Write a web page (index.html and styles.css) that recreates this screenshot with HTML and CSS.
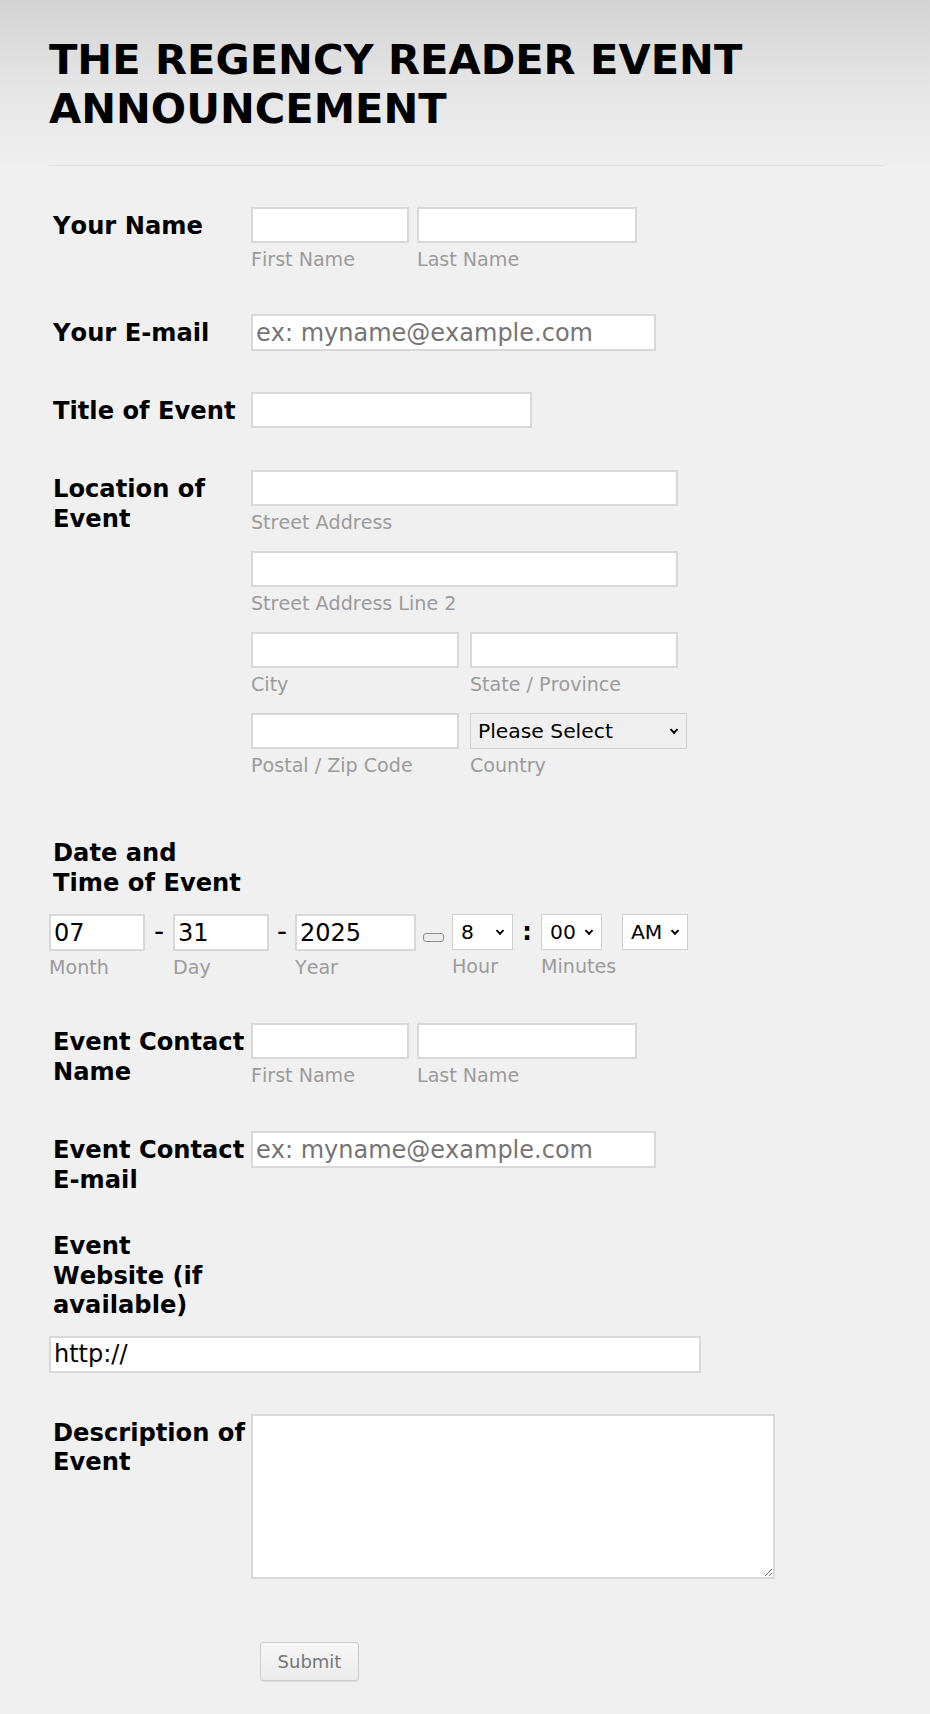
FILE: index.html
```html
<!DOCTYPE html>
<html lang="en">
<head>
<meta charset="utf-8">
<title>The Regency Reader Event Announcement</title>
<link rel="stylesheet" href="styles.css">
</head>
<body>
<header class="header">
  <h1 class="title">THE REGENCY READER EVENT ANNOUNCEMENT</h1>
  <div class="divider"></div>
</header>

<form class="form">
  <div class="row r-name">
    <label class="label">Your Name</label>
    <div class="pair">
      <div class="cell"><input class="in in-first" type="text"><span class="sub">First Name</span></div>
      <div class="cell"><input class="in in-last" type="text"><span class="sub">Last Name</span></div>
    </div>
  </div>

  <div class="row r-email">
    <label class="label">Your E-mail</label>
    <input class="in in-email tall" type="email" placeholder="ex: myname@example.com">
  </div>

  <div class="row r-title">
    <label class="label">Title of Event</label>
    <input class="in in-title" type="text">
  </div>

  <div class="row r-loc">
    <label class="label">Location of Event</label>
    <div class="loc">
      <div class="cell span2"><input class="in in-street" type="text"><span class="sub">Street Address</span></div>
      <div class="cell span2"><input class="in in-street" type="text"><span class="sub">Street Address Line 2</span></div>
      <div class="cell"><input class="in in-half" type="text"><span class="sub">City</span></div>
      <div class="cell"><input class="in in-half" type="text"><span class="sub">State / Province</span></div>
      <div class="cell"><input class="in in-half" type="text"><span class="sub">Postal / Zip Code</span></div>
      <div class="cell">
        <span class="sel-wrap">
          <select class="sel sel-country">
            <option>Please Select</option>
            <option>United States</option>
            <option>United Kingdom</option>
            <option>Canada</option>
          </select>
        </span>
        <span class="sub">Country</span>
      </div>
    </div>
  </div>

  <div class="row stack r-date">
    <label class="label">Date and Time of Event</label>
    <div class="datetime">
      <div class="cell"><input class="in tall in-month" type="text" value="07"><span class="sub">Month</span></div>
      <span class="sep sep-dash">-</span>
      <div class="cell"><input class="in tall in-day" type="text" value="31"><span class="sub">Day</span></div>
      <span class="sep sep-dash2">-</span>
      <div class="cell"><input class="in tall in-year" type="text" value="2025"><span class="sub">Year</span></div>
      <span class="cal-btn"></span>
      <div class="cell cell-hour">
        <span class="sel-wrap">
          <select class="sel sel-hour">
            <option>1</option><option>2</option><option>3</option><option>4</option>
            <option>5</option><option>6</option><option>7</option><option selected>8</option>
            <option>9</option><option>10</option><option>11</option><option>12</option>
          </select>
        </span>
        <span class="sub">Hour</span>
      </div>
      <span class="sep sep-colon">:</span>
      <div class="cell cell-min">
        <span class="sel-wrap">
          <select class="sel sel-min">
            <option selected>00</option><option>15</option><option>30</option><option>45</option>
          </select>
        </span>
        <span class="sub">Minutes</span>
      </div>
      <div class="cell cell-ampm">
        <span class="sel-wrap">
          <select class="sel sel-ampm">
            <option selected>AM</option><option>PM</option>
          </select>
        </span>
      </div>
    </div>
  </div>

  <div class="row r-contact">
    <label class="label">Event Contact Name</label>
    <div class="pair">
      <div class="cell"><input class="in in-first" type="text"><span class="sub">First Name</span></div>
      <div class="cell"><input class="in in-last" type="text"><span class="sub">Last Name</span></div>
    </div>
  </div>

  <div class="row r-cemail">
    <label class="label">Event Contact E-mail</label>
    <input class="in in-email tall" type="email" placeholder="ex: myname@example.com">
  </div>

  <div class="row stack r-web">
    <label class="label">Event Website (if available)</label>
    <input class="in in-web tall" type="text" value="http://">
  </div>

  <div class="row r-desc">
    <label class="label">Description of Event</label>
    <textarea class="ta"></textarea>
  </div>

  <div class="row r-submit">
    <button class="submit" type="button">Submit</button>
  </div>
</form>
</body>
</html>
```

FILE: styles.css
```css
* {
  box-sizing: border-box;
}

body {
  margin: 0;
  background: #f0f0f0;
  color: #000;
  font-family: "DejaVu Sans", Verdana, sans-serif;
  font-kerning: none;
}

input,
select,
textarea,
button {
  font-kerning: none;
}

/* ---------- header ---------- */
.header {
  padding: 35px 47px 0 49px;
  background: linear-gradient(180deg, #d3d3d3 0%, #e6e6e6 55%, #efefef 100%);
}

.title {
  margin: 0;
  font-size: 41.6px;
  font-weight: bold;
  line-height: 49px;
}

.divider {
  height: 1px;
  margin-top: 32px;
  background: #e2e2e2;
}

/* ---------- form ---------- */
.form {
  padding: 0 47px 32px 49px;
}

.row {
  display: flex;
  align-items: flex-start;
}

.row.stack {
  flex-direction: column;
}

.label {
  flex: 0 0 202px;
  width: 202px;
  padding: 5px 5px 0 4px;
  font-size: 24.2px;
  font-weight: bold;
  line-height: 29.5px;
}

.row.stack .label {
  flex: none;
  width: 202px;
}

.r-name { margin-top: 41px; }
.r-email { margin-top: 43px; }
.r-title { margin-top: 41px; }
.r-loc { margin-top: 42px; }
.r-date { margin-top: 57px; }
.r-contact { margin-top: 44px; }
.r-cemail { margin-top: 44px; }
.r-web { margin-top: 32px; }
.r-desc { margin-top: 41px; }
.r-submit { margin-top: 63px; }

.cell {
  display: flex;
  flex-direction: column;
  align-items: flex-start;
  min-width: 0;
}

.pair {
  display: flex;
  gap: 8px;
}

.in {
  display: block;
  height: 36px;
  padding: 0 3px;
  border: 2px solid #d8d8d8;
  border-radius: 0;
  background: #fff;
  color: #000;
  font-family: "DejaVu Sans", Verdana, sans-serif;
  font-size: 24px;
  outline: none;
}

.in.tall {
  height: 37px;
}

.in::placeholder {
  color: #757575;
}

.in-first { width: 158px; }
.in-last { width: 220px; }
.in-email { width: 405px; }
.in-title { width: 281px; }
.in-street { width: 427px; }
.in-half { width: 208px; }
.in-web { width: 652px; margin-top: 15px; }

.sub {
  display: block;
  margin-top: 6px;
  font-size: 19.1px;
  line-height: 22px;
  color: #9b9b9b;
  white-space: nowrap;
}

/* ---------- location ---------- */
.loc {
  display: grid;
  grid-template-columns: 208px 208px;
  column-gap: 11px;
  row-gap: 17px;
}

.span2 {
  grid-column: span 2;
}

/* ---------- selects ---------- */
.sel-wrap {
  position: relative;
  display: block;
}

.sel-wrap::after {
  content: "";
  position: absolute;
  top: 50%;
  right: 10px;
  width: 4px;
  height: 4px;
  border-right: 2.3px solid #000;
  border-bottom: 2.3px solid #000;
  transform: translateY(-70%) rotate(45deg);
  pointer-events: none;
}

.sel {
  display: block;
  height: 36px;
  padding: 0 20px 0 8px;
  border: 1px solid #cfcfcf;
  border-radius: 0;
  background-color: #fff;
  color: #000;
  font-family: "DejaVu Sans", Verdana, sans-serif;
  font-size: 20.3px;
  -webkit-appearance: none;
  appearance: none;
}

.sel-country {
  width: 217px;
  padding-left: 7px;
  background-color: #efefef;
}

.sel-hour { width: 61px; }
.sel-min { width: 61px; }
.sel-ampm { width: 66px; }

/* ---------- date / time ---------- */
.datetime {
  display: flex;
  align-items: flex-start;
  margin-top: 16px;
}

.in-month { width: 96px; }
.in-day { width: 96px; }
.in-year { width: 121px; }

.cell-hour,
.cell-min {
  width: 61px;
}

.cell-ampm {
  width: 66px;
  margin-left: 20px;
}

.sep {
  height: 37px;
  line-height: 35px;
  text-align: center;
  font-size: 28px;
  font-weight: normal;
}

.sep-dash { width: 28px; }
.sep-dash2 { width: 26px; }

.sep-colon {
  width: 28px;
  height: 36px;
  line-height: 36px;
  font-size: 24px;
  font-weight: bold;
}

.cal-btn {
  width: 21px;
  height: 9px;
  margin: 19px 8px 0 7px;
  border: 1px solid #8d8d8d;
  border-radius: 3px;
  background: #ececec;
}

/* ---------- textarea ---------- */
.ta {
  display: block;
  width: 524px;
  height: 165px;
  border: 2px solid #d8d8d8;
  background: #fff;
  font-family: "DejaVu Sans", Verdana, sans-serif;
  font-size: 20px;
}

/* ---------- submit ---------- */
.submit {
  margin-left: 211px;
  width: 99px;
  height: 39px;
  border: 1px solid #cdcdcd;
  border-radius: 3px;
  background: linear-gradient(#f6f6f6, #ececec);
  box-shadow: 0 1px 1px rgba(0, 0, 0, 0.08);
  color: #777;
  font-family: "DejaVu Sans", Verdana, sans-serif;
  font-size: 18px;
}
```
